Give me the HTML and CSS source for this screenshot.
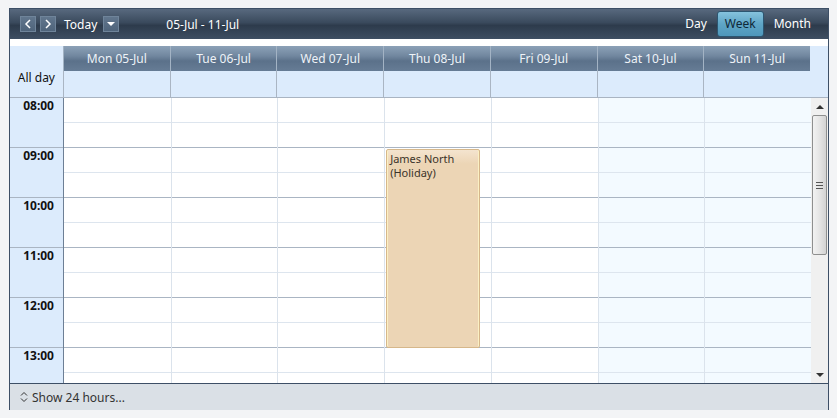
FILE: index.html
```html
<!DOCTYPE html>
<html lang="en">
<head>
  <meta charset="UTF-8">
  <title>Week planner</title>
  <link rel="stylesheet" href="styles.css">
</head>
<body>

  <div class="scheduler">
    <div class="toolbar">
      <div class="nav">
        <button class="nav-btn" type="button">
          <svg width="8" height="10" viewBox="0 0 8 10"><path d="M6 1 L2 5 L6 9" fill="none" stroke="#fff" stroke-width="1.5"/></svg>
        </button>
        <button class="nav-btn" type="button">
          <svg width="8" height="10" viewBox="0 0 8 10"><path d="M2 1 L6 5 L2 9" fill="none" stroke="#fff" stroke-width="1.5"/></svg>
        </button>
        <span class="today">Today</span>
        <button class="nav-btn drop" type="button">
          <svg width="10" height="6" viewBox="0 0 10 6"><path d="M1 1 L9 1 L5 5 Z" fill="#fff"/></svg>
        </button>
        <span class="range">05-Jul - 11-Jul</span>
      </div>
      <div class="views">
        <span class="view">Day</span>
        <span class="view active">Week</span>
        <span class="view">Month</span>
      </div>
    </div>

    <div class="gap-strip"></div>

    <div class="head-row">
      <div class="corner"></div>
      <div class="day-head">Mon 05-Jul</div>
      <div class="day-head">Tue 06-Jul</div>
      <div class="day-head">Wed 07-Jul</div>
      <div class="day-head">Thu 08-Jul</div>
      <div class="day-head">Fri 09-Jul</div>
      <div class="day-head">Sat 10-Jul</div>
      <div class="day-head">Sun 11-Jul</div>
      <div class="head-spacer"></div>
    </div>

    <div class="allday-row">
      <div class="allday-label">All day</div>
      <div class="allday-cell"></div>
      <div class="allday-cell"></div>
      <div class="allday-cell"></div>
      <div class="allday-cell"></div>
      <div class="allday-cell"></div>
      <div class="allday-cell"></div>
      <div class="allday-cell"></div>
      <div class="head-spacer"></div>
    </div>

    <div class="body">
      <div class="grid">
        <div class="times">
          <div class="time">08:00</div>
          <div class="time">09:00</div>
          <div class="time">10:00</div>
          <div class="time">11:00</div>
          <div class="time">12:00</div>
          <div class="time">13:00</div>
        </div>
        <div class="days">
          <div class="day"></div>
          <div class="day"></div>
          <div class="day"></div>
          <div class="day">
            <div class="event" style="top: 51px; height: 199px;">James North (Holiday)</div>
          </div>
          <div class="day"></div>
          <div class="day weekend"></div>
          <div class="day weekend"></div>
        </div>
      </div>
      <div class="scrollbar">
        <div class="arrow up"></div>
        <div class="track">
          <div class="thumb"><span class="grip"></span></div>
        </div>
        <div class="arrow down"></div>
      </div>
    </div>

    <div class="footer">
      <svg width="8" height="12" viewBox="0 0 8 12"><path d="M1 4.5 L4 1.5 L7 4.5 M1 7.5 L4 10.5 L7 7.5" fill="none" stroke="#333" stroke-width="1"/></svg>
      <span>Show 24 hours...</span>
    </div>
  </div>

</body>
</html>
```

FILE: styles.css
```css
body {
  margin: 0;
  padding: 8px 0 0 9px;
  background: #f3f4f6;
  font-family: 'Noto Sans', 'DejaVu Sans', sans-serif;
  font-size: 12px;
}

.scheduler {
  width: 818px;
  border: 1px solid #3d4f66;
  border-bottom: none;
  background: #fff;
}

/* top bar */
.toolbar {
  height: 30px;
  display: flex;
  align-items: center;
  justify-content: space-between;
  padding: 0 11px 0 10px;
  background: linear-gradient(#58697e, #3a4a5d 45%, #2d3b4c 55%, #3e4e62);
  color: #fff;
}

.nav {
  display: flex;
  align-items: center;
}

.nav-btn {
  width: 16px;
  height: 16px;
  padding: 0;
  margin-right: 4px;
  border: 1px solid #6f849a;
  background: linear-gradient(#61768d, #4f647b);
  display: flex;
  align-items: center;
  justify-content: center;
}

.nav-btn.drop {
  margin-left: 6px;
}

.today {
  margin-left: 4px;
  font-size: 12px;
}

.range {
  margin-left: 43px;
}

.views {
  display: flex;
  align-items: center;
}

.view {
  padding: 3px 6px 4px;
}

.view.active {
  margin: 0 4px;
  padding: 3px 7px 4px;
  color: #0f2838;
  background: linear-gradient(#86c3dd, #5ea5c6 50%, #4f97bb);
  border: 1px solid #2c5671;
  border-radius: 3px;
}

.gap-strip {
  height: 7px;
  background: #fff;
}

/* header + all day */
.head-row,
.allday-row {
  display: grid;
  grid-template-columns: 53px repeat(7, 1fr) 18px;
  background: #dcebfc;
}

.head-row {
  height: 25px;
}

.day-head {
  display: flex;
  align-items: center;
  justify-content: center;
  color: #eef3f8;
  background: linear-gradient(#8ca1b7, #71879f 40%, #5b718a 60%, #667c95);
  border-left: 1px solid #a3b3c4;
}

.allday-row {
  height: 27px;
  border-bottom: 1px solid #a9b4c2;
  box-sizing: border-box;
}

.allday-label {
  padding: 0 8px 0 0;
  text-align: right;
  line-height: 14px;
  color: #111;
}

.allday-cell {
  border-left: 1px solid #aab5c3;
}

/* time grid */
.body {
  display: flex;
  height: 285px;
}

.grid {
  flex: 1;
  display: flex;
  overflow: hidden;
}

.times {
  width: 53px;
  background: #dcebfc;
  border-right: 1px solid #6d7f95;
}

.time {
  height: 48px;
  border-bottom: 1px solid #aab5c3;
  text-align: right;
  padding: 1px 9px 0 0;
  font-weight: bold;
  color: #111;
  line-height: 14px;
}

.days {
  flex: 1;
  display: grid;
  grid-template-columns: repeat(7, 1fr);
}

.day {
  position: relative;
  border-left: 1px solid #dbe3ec;
  background:
    repeating-linear-gradient(
      to bottom,
      transparent 0, transparent 24px,
      #dde5ee 24px, #dde5ee 25px,
      transparent 25px, transparent 49px,
      #aab5c3 49px, #aab5c3 50px
    ),
    #fff;
}

.day:first-child {
  border-left: none;
}

.day.weekend {
  background:
    repeating-linear-gradient(
      to bottom,
      transparent 0, transparent 24px,
      #dde5ee 24px, #dde5ee 25px,
      transparent 25px, transparent 49px,
      #aab5c3 49px, #aab5c3 50px
    ),
    #f3faff;
}

.event {
  position: absolute;
  left: 1px;
  width: 94px;
  box-sizing: border-box;
  padding: 2px 3px;
  font-size: 11px;
  line-height: 14px;
  color: #3b3329;
  background: linear-gradient(#f4e4cf, #ecd5b5 14px, #ecd5b5);
  border: 1px solid #d6b78a;
  border-radius: 2px;
  box-shadow: inset 1px 0 0 #fbf0c4, inset -1px 0 0 #fbf0c4;
}

/* scrollbar */
.scrollbar {
  width: 17px;
  display: flex;
  flex-direction: column;
  background: #f0f0f0;
}

.arrow {
  height: 17px;
  display: flex;
  align-items: center;
  justify-content: center;
}

.arrow::after {
  content: "";
  border-left: 4px solid transparent;
  border-right: 4px solid transparent;
}

.arrow.up::after {
  border-bottom: 4px solid #333;
}

.arrow.down::after {
  border-top: 4px solid #333;
}

.track {
  flex: 1;
}

.thumb {
  margin: 0 1px;
  height: 138px;
  border: 1px solid #8e8f8f;
  border-radius: 2px;
  background: linear-gradient(to right, #f2f2f2, #e6e6e6 45%, #d3d3d3);
  display: flex;
  align-items: center;
  justify-content: center;
}

.grip {
  width: 7px;
  height: 5px;
  border-top: 1px solid #555;
  border-bottom: 1px solid #555;
  background: linear-gradient(transparent 2px, #555 2px, #555 3px, transparent 3px);
}

/* bottom bar */
.footer {
  height: 26px;
  display: flex;
  align-items: center;
  gap: 4px;
  padding-left: 10px;
  border-top: 1px solid #3d4f66;
  background: #dae0e6;
  color: #333;
}
```
